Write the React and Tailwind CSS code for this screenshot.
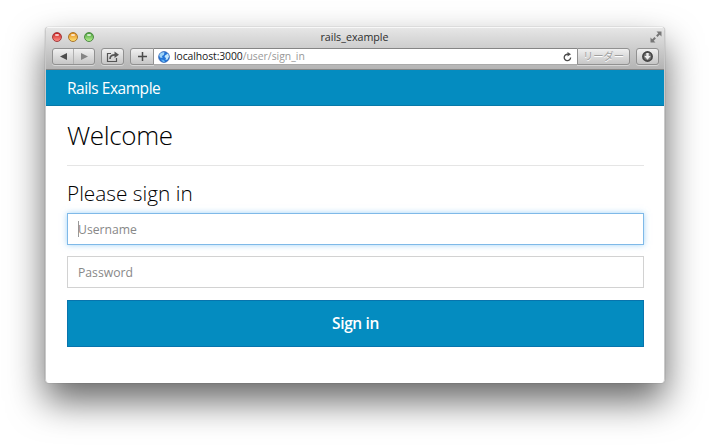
const button =
  "flex h-[17px] shrink-0 items-center justify-center rounded-[3px] border border-[#919191] bg-linear-to-b from-[#f0f0f0] to-[#c6c6c6] shadow-[0_1px_0_rgba(255,255,255,0.45)]";

function Light({ colors }) {
  return (
    <span
      className={
        "flex h-[10px] w-[10px] justify-center rounded-full border bg-linear-to-b pt-px " + colors
      }
    >
      <span className="h-[2px] w-[4px] rounded-full bg-white/70" />
    </span>
  );
}

function TitleBar() {
  return (
    <div className="flex h-[20px] items-center justify-between pr-[3px] pl-[7px]">
      <div className="mt-[-2px] flex w-[60px] gap-[6px]">
        <Light colors="border-[#a33a3c] from-[#c9141c] to-[#ff8a84]" />
        <Light colors="border-[#a9752c] from-[#e08a10] to-[#ffe070]" />
        <Light colors="border-[#4f8a45] from-[#46a038] to-[#b4f090]" />
      </div>
      <span className="mt-[-2px] mr-[5px] font-['Lucida_Grande','Open_Sans',sans-serif] text-[10.700px] leading-none text-[#2e2e2e]">
        rails_example
      </span>
      <div className="mt-[-3px] flex w-[60px] justify-end">
        <svg width="12" height="12" viewBox="0 0 12 12" fill="#777" stroke="#777">
          <path d="M6.500.5h5v5zM.5 6.500v5h5z" stroke="none" />
          <path d="M6.800 5.200 9.500 2.500M5.200 6.800 2.500 9.500" strokeWidth="2" />
        </svg>
      </div>
    </div>
  );
}

function Toolbar() {
  return (
    <div className="flex h-[17px] pr-[6px] pl-[7px]">
      <div className={button + " w-[43px]"}>
        <span className="flex h-full w-[21px] items-center justify-center border-r border-[#b0b0b0]">
          <svg width="7" height="7" viewBox="0 0 7 7">
            <path d="M7 0v7L0 3.500z" fill="#4c4c4c" />
          </svg>
        </span>
        <span className="flex w-[20px] items-center justify-center">
          <svg width="7" height="7" viewBox="0 0 7 7">
            <path d="M0 0v7l7-3.500z" fill="#858585" />
          </svg>
        </span>
      </div>
      <div className={button + " ml-[6px] w-[23px]"}>
        <svg width="14" height="11" viewBox="0 0 14 11" fill="none" stroke="#555">
          <path d="M5 2.500H1.500v8h9V7" strokeWidth="1.200" />
          <path d="M4 8C4 5 6 3.800 9 3.800" strokeWidth="1.700" />
          <path d="M8.500.5 13 3.800 8.500 7z" fill="#555" stroke="none" />
        </svg>
      </div>
      <div className={button + " ml-[6px] w-[24px] rounded-r-none"}>
        <svg width="9" height="9" viewBox="0 0 9 9" stroke="#4a4a4a" strokeWidth="1.500">
          <path d="M4.500 0v9M0 4.500h9" />
        </svg>
      </div>
      <div className="flex h-[17px] min-w-0 flex-1 items-center border-y border-t-[#858585] border-b-[#aaa] bg-white pr-[5px] pl-[4px]">
        <svg width="12" height="12" viewBox="0 0 12 12">
          <circle cx="6" cy="6" r="5.400" fill="#2475d8" stroke="#2454a6" strokeWidth=".7" />
          <path d="M1.200 4.500C2 2 4.500.9 6.500 1.500L5.800 4 4 5 4.500 7 2 6.500z" fill="#9fd4f8" />
          <path d="M7 4.500l3-2 1 3-1.500 3L7.500 9 8 7 6.500 6z" fill="#c4e8fc" />
          <path d="M3 8.500l3 .5 1 2H5z" fill="#62b5f2" />
        </svg>
        <span className="ml-[4px] font-['Lucida_Grande','Open_Sans',sans-serif] text-[10.400px] leading-none whitespace-nowrap text-[#202020]">
          <span className="tracking-[-0.1px]">localhost:3000</span>
          <span className="text-[#999]">/user/sign_in</span>
        </span>
        <svg className="ml-auto" width="9" height="10" viewBox="0 0 9 10" fill="none" stroke="#4c4c4c">
          <path d="M7.600 5.400A3.200 3.200 0 1 1 5 2.300" strokeWidth="1.300" />
          <path d="M4.500 0 8 2.300 4.500 4.600z" fill="#4c4c4c" stroke="none" />
        </svg>
      </div>
      <div className={button + " w-[53px] rounded-l-none"}>
        <span className="font-['Noto_Sans_CJK_JP',sans-serif] text-[10.300px] leading-none whitespace-nowrap text-[#a0a0a0] [text-shadow:0_1px_0_#fff]">
          リーダー
        </span>
      </div>
      <div className={button + " ml-[6px] w-[23px]"}>
        <svg width="11" height="11" viewBox="0 0 11 11">
          <circle cx="5.500" cy="5.500" r="4.600" fill="#777" stroke="#444" strokeWidth="1.700" />
          <path d="M4.300 2h2.400v3h2L5.500 8.800 2.300 5h2z" fill="#eee" />
        </svg>
      </div>
    </div>
  );
}

export default function App() {
  return (
    <div className="h-[446px] w-[710px] overflow-hidden bg-white pt-[27px] pl-[45px] font-['Open_Sans',sans-serif]">
      <div className="h-[356px] w-[620px] rounded-[4px] shadow-[0_18px_36px_rgba(0,0,0,0.6),0_0_1px_rgba(0,0,0,0.5)]">
        <div className="flex h-full flex-col overflow-hidden rounded-[4px] border-x border-[#c9c9c9] bg-white">
          <div className="-mx-px h-[43px] border-t border-b border-t-[#f8f8f8] border-b-[#858585] bg-linear-to-b from-[#e6e6e6] to-[#b4b4b4]">
            <TitleBar />
            <Toolbar />
          </div>
          <header className="flex h-[36px] items-center border-b border-[#0779a8] bg-[#048cc0] pt-[2px] pl-[21px] text-[15.500px] tracking-[-0.450px] text-white">
            Rails Example
          </header>
          <main className="flex flex-col pr-[20px] pl-[21px]">
            <h1 className="mt-[11px] h-[36px] text-[26px] leading-[36px] font-light tracking-[-0.350px] text-black">
              Welcome
            </h1>
            <hr className="mt-[12px] border-[#e5e5e5]" />
            <h2 className="mt-[12px] h-[30px] text-[20.800px] leading-[30px] font-light text-black">
              Please sign in
            </h2>
            <div className="mt-[5px] flex h-[32px] items-center border border-[#7fb9e8] pl-[10px] text-[12.200px] text-[#888] shadow-[0_0_6px_rgba(102,185,243,0.6)]">
              <span className="h-[16px] w-px bg-[#999]" />
              <span className="-ml-px pt-[2px]">Username</span>
            </div>
            <div className="mt-[11px] flex h-[32px] items-center border border-[#d2d2d2] pl-[10px] text-[12.200px] text-[#888]">
              <span className="pt-[2px]">Password</span>
            </div>
            <div className="mt-[12px] flex h-[47px] items-center justify-center border border-[#0874ad] bg-[#048cc0] text-[15.500px] font-semibold tracking-[-0.350px] text-white">
              Sign in
            </div>
          </main>
        </div>
      </div>
    </div>
  );
}
